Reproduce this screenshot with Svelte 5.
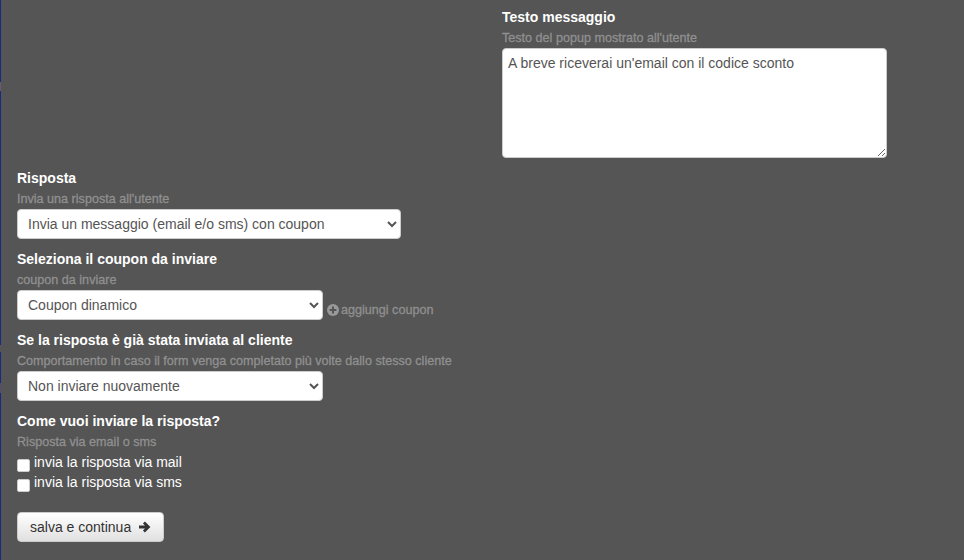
<script>
  const responses = ['Invia un messaggio (email e/o sms) con coupon'];
</script>

<div class="page">
  <div class="top">
    <div class="col-right">
      <div class="title">Testo messaggio</div>
      <div class="hint">Testo del popup mostrato all'utente</div>
      <textarea class="area">A breve riceverai un'email con il codice sconto</textarea>
    </div>
  </div>

  <section>
    <div class="title">Risposta</div>
    <div class="hint">Invia una risposta all'utente</div>
    <select class="ctl wide">
      {#each responses as r}<option>{r}</option>{/each}
    </select>
  </section>

  <section>
    <div class="title">Seleziona il coupon da inviare</div>
    <div class="hint">coupon da inviare</div>
    <div class="inline">
      <select class="ctl narrow"><option>Coupon dinamico</option></select>
      <span class="add">
        <svg viewBox="0 0 12 12" width="12" height="12"><circle cx="6" cy="6" r="6" fill="#999"/><path d="M6 2.6v6.8M2.6 6h6.8" stroke="#555" stroke-width="2"/></svg>
        aggiungi coupon
      </span>
    </div>
  </section>

  <section>
    <div class="title">Se la risposta è già stata inviata al cliente</div>
    <div class="hint">Comportamento in caso il form venga completato più volte dallo stesso cliente</div>
    <select class="ctl narrow"><option>Non inviare nuovamente</option></select>
  </section>

  <section>
    <div class="title">Come vuoi inviare la risposta?</div>
    <div class="hint">Risposta via email o sms</div>
    <label class="check"><input type="checkbox" /> <span>invia la risposta via mail</span></label>
    <label class="check"><input type="checkbox" /> <span>invia la risposta via sms</span></label>
  </section>

  <button class="save">salva e continua
    <svg viewBox="0 0 12 12" width="12" height="12"><path d="M0 6h9M5 1.4 9.6 6 5 10.6" fill="none" stroke="#333" stroke-width="2.8"/></svg>
  </button>
</div>

<style>
  :global(body) {
    margin: 0;
    background: #555;
  }
  .page {
    box-sizing: border-box;
    width: 964px;
    height: 560px;
    overflow: hidden;
    padding: 7px 0 0 16px;
    background: #555;
    border-left: 1px solid #1a2a80;
    border-image: linear-gradient(
      #1a2a80 83px, #6a5a70 83px, #6a5a70 92px, #1a2a80 92px,
      #1a2a80 345px, #555 345px, #555 352px, #1a2a80 352px,
      #1a2a80 383px, #5a4a70 383px, #5a4a70 393px, #1a2a80 393px
    ) 1;
    font: 14px/20px "Liberation Sans", Arial, sans-serif;
    color: #fff;
  }
  .top {
    display: flex;
    justify-content: flex-start;
    padding-left: 485px;
  }
  .col-right {
    width: 385px;
  }
  .title {
    font-weight: 700;
  }
  .hint {
    padding-top: 1px;
    font-size: 12.6px;
    line-height: 20px;
    color: #909090;
    -webkit-text-stroke: 0.3px #909090;
  }
  .area {
    display: block;
    box-sizing: border-box;
    width: 385px;
    height: 110px;
    padding: 4px 5px;
    border: 1px solid #ccc;
    border-radius: 4px;
    background: #fff;
    color: #555;
    font: 14px/20px "Liberation Sans", Arial, sans-serif;
  }
  section {
    margin-top: 10px;
  }
  .ctl {
    display: block;
    box-sizing: border-box;
    height: 30px;
    padding: 5px 6px;
    border: 1px solid #ccc;
    border-radius: 4px;
    background: #fff;
    color: #555;
    font: 14px/20px "Liberation Sans", Arial, sans-serif;
  }
  .wide { width: 384px; }
  .narrow { width: 306px; }
  .inline {
    display: flex;
    align-items: flex-end;
    gap: 4px;
  }
  .add {
    display: inline-flex;
    align-items: center;
    gap: 2px;
    color: #909090;
    font-size: 12.6px;
    line-height: 20px;
    -webkit-text-stroke: 0.3px #909090;
  }
  .check {
    display: flex;
    align-items: flex-start;
    height: 20px;
    gap: 4px;
  }
  .check input {
    appearance: none;
    box-sizing: border-box;
    width: 13px;
    height: 13px;
    margin: 7px 0 0 0;
    border: 1px solid #ccc;
    border-radius: 2px;
    background: #fff;
  }
  .save {
    display: flex;
    align-items: center;
    gap: 8px;
    box-sizing: border-box;
    width: 147px;
    height: 30px;
    margin-top: 20px;
    padding: 0 12px;
    border: 1px solid #ccc;
    border-radius: 4px;
    background: linear-gradient(#fff, #e0e0e0);
    color: #333;
    white-space: nowrap;
    font: 14px/20px "Liberation Sans", Arial, sans-serif;
  }
</style>
